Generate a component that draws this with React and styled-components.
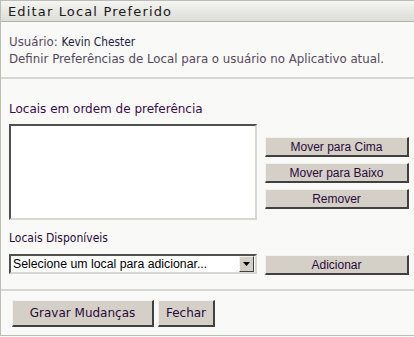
import React from "react";
import styled, { createGlobalStyle } from "styled-components";

const Global = createGlobalStyle`
  body {
    margin: 0;
    background: #f9f9f7;
    font-family: "DejaVu Sans", Verdana, sans-serif;
  }
`;

const Panel = styled.div`
  width: 414px;
  height: 336px;
  box-sizing: border-box;
  border: 1px solid #bdbdb5;
  border-right: none;
  background: #f9f9f7;
  display: flex;
  flex-direction: column;
`;

const Header = styled.div`
  height: 20px;
  background: linear-gradient(#f4f4f2, #dcdcd8);
  border-bottom: 1px solid #b0b0a8;
  display: flex;
  align-items: center;
  padding-left: 7px;
  font-size: 13px;
  letter-spacing: 1.15px;
  color: #1a1a1a;
`;

const Info = styled.div`
  padding: 12px 8px 0;
  height: 43px;
  border-bottom: 2px solid #d6d6d2;
  font-size: 11.8px;
  color: #574860;
  line-height: 17px;
`;

const User = styled.span`
  font-family: "DejaVu Sans Condensed", "Liberation Sans Narrow", sans-serif;
  color: #1e2240;
`;

const Form = styled.div`
  padding: 22px 6px 0 8px;
  display: flex;
  flex-direction: column;
`;

const Label = styled.div`
  font-size: 12px;
  color: ${(p) => p.$color || "#3b0b4b"};
  font-family: ${(p) => (p.$narrow ? '"DejaVu Sans Condensed", sans-serif' : "inherit")};
  height: 16px;
  line-height: 16px;
  margin-top: ${(p) => p.$top || 0}px;
  margin-bottom: ${(p) => p.$gap || 0}px;
`;

const Row = styled.div`
  display: grid;
  grid-template-columns: 248px 144px;
  column-gap: 8px;
  align-items: start;
`;

const ListBox = styled.div`
  height: 96px;
  box-sizing: border-box;
  background: #fff;
  border: 2px solid;
  border-color: #505050 #d8d6d0 #d8d6d0 #505050;
`;

const ButtonStack = styled.div`
  display: flex;
  flex-direction: column;
  gap: 6px;
  padding-top: 13px;
`;

const Button = styled.button`
  height: ${(p) => p.$h || 20}px;
  width: ${(p) => (p.$w ? `${p.$w}px` : "100%")};
  box-sizing: border-box;
  margin: ${(p) => p.$top || 0}px 0 0;
  padding: 0;
  background: #d4d0c8;
  border: 1px solid;
  border-width: 1px 2px 2px 1px;
  border-color: #f4f2ee #404040 #404040 #f4f2ee;
  font-family: ${(p) =>
    p.$verdana ? '"DejaVu Sans", sans-serif' : '"Liberation Sans", Arial, sans-serif'};
  font-size: 12px;
  color: #2a0a3a;
`;

const Select = styled.div`
  height: 20px;
  box-sizing: border-box;
  background: #fff;
  border: 2px solid;
  border-color: #505050 #d8d6d0 #d8d6d0 #505050;
  display: flex;
  align-items: center;
  font-family: "Liberation Sans", Arial, sans-serif;
  font-size: 12.3px;
  color: #000;
`;

const SelectText = styled.span`
  flex: 1;
  padding-left: 2px;
`;

const Arrow = styled.span`
  width: 15px;
  height: 16px;
  margin-right: 1px;
  box-sizing: border-box;
  background: #d4d0c8;
  border: 1px solid;
  border-color: #f4f2ee #404040 #404040 #f4f2ee;
  display: flex;
  align-items: center;
  justify-content: center;
`;

const Footer = styled.div`
  margin-top: 14px;
  border-top: 2px solid #d6d6d2;
  padding: 9px 11px 0;
  display: flex;
  gap: 4px;
`;

export default function App() {
  return (
    <>
      <Global />
      <Panel>
        <Header>Editar Local Preferido</Header>
        <Info>
          Usuário: <User>Kevin Chester</User>
          <br />
          Definir Preferências de Local para o usuário no Aplicativo atual.
        </Info>
        <Form>
          <Label $gap={7}>Locais em ordem de preferência</Label>
          <Row>
            <ListBox />
            <ButtonStack>
              <Button>Mover para Cima</Button>
              <Button>Mover para Baixo</Button>
              <Button>Remover</Button>
            </ButtonStack>
          </Row>
          <Label $narrow $color="#2a0a3a" $top={10} $gap={8}>
            Locais Disponíveis
          </Label>
          <Row>
            <Select>
              <SelectText>Selecione um local para adicionar...</SelectText>
              <Arrow>
                <svg width="7" height="4" viewBox="0 0 7 4">
                  <path d="M0 0h7L3.5 4z" fill="#000" />
                </svg>
              </Arrow>
            </Select>
            <Button $top={1}>Adicionar</Button>
          </Row>
        </Form>
        <Footer>
          <Button $verdana $h={27} $w={142}>Gravar Mudanças</Button>
          <Button $verdana $h={27} $w={57}>Fechar</Button>
        </Footer>
      </Panel>
    </>
  );
}
